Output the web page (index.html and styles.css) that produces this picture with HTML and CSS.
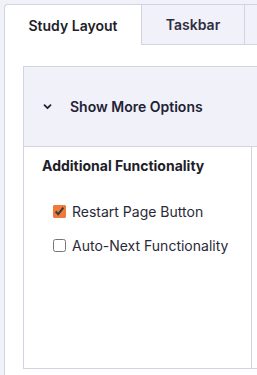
FILE: index.html
```html
<!DOCTYPE html>
<html>
<head>
<meta charset="utf-8">
<link rel="stylesheet" href="styles.css">
</head>
<body>
<div class="wrap">
  <div class="tabs">
    <div class="tab active">Study Layout</div>
    <div class="tab">Taskbar</div>
    <div class="tab tab-rest"></div>
  </div>
  <div class="panel">
    <div class="box">
      <div class="box-head">
        <svg class="chev" width="9" height="6" viewBox="0 0 9 6"><path d="M1.5 1.2 L4.5 4.2 L7.5 1.2" fill="none" stroke="#222233" stroke-width="1.8" stroke-linecap="round" stroke-linejoin="round"/></svg>
        <span class="head-text">Show More Options</span>
      </div>
      <div class="box-body">
        <div class="col">
          <div class="col-title">Additional Functionality</div>
          <label class="opt"><input type="checkbox" checked> Restart Page Button</label>
          <label class="opt"><input type="checkbox"> Auto-Next Functionality</label>
        </div>
        <div class="col2"></div>
      </div>
    </div>
  </div>
</div>
</body>
</html>
```
FILE: styles.css
```css
html, body {
  margin: 0;
  padding: 0;
  background: #f1f1fa;
  height: 100%;
  overflow: hidden;
}
.wrap {
  padding: 4px 0 0 4px;
  display: flex;
  flex-direction: column;
  height: 371px;
  font-family: Inter, "Liberation Sans", sans-serif;
  color: #222233;
}
.tabs {
  display: flex;
  height: 41px;
}
.tab {
  flex: none;
  box-sizing: border-box;
  width: 103px;
  height: 41px;
  border: 1px solid #d3d3e2;
  border-left: none;
  background: #f1f1fa;
  font-size: 14px;
  font-weight: 600;
  display: flex;
  align-items: center;
  justify-content: center;
  color: #2e2e40;
}
.tab.active {
  width: 138px;
  border-left: 1px solid #d3d3e2;
  border-bottom: none;
  background: #fff;
  border-top-left-radius: 4px;
  color: #1e1e2a;
}
.tab.tab-rest {
  width: 20px;
  border-right: none;
}
.panel {
  flex: 1;
  background: #fff;
  border-left: 1px solid #d3d3e2;
  padding: 21px 0 0 18px;
  display: flex;
  flex-direction: column;
}
.box {
  height: 301px;
  border: 1px solid #d3d3e2;
  border-right: none;
  display: flex;
  flex-direction: column;
}
.box-head {
  flex: none;
  height: 79px;
  background: #f1f1fa;
  border-bottom: 1px solid #d3d3e2;
  display: flex;
  align-items: center;
  padding-left: 19px;
}
.chev {
  margin-right: 18px;
  margin-top: 1px;
}
.head-text {
  font-size: 14px;
  font-weight: 600;
  color: #222233;
}
.box-body {
  flex: 1;
  display: flex;
}
.col {
  width: 209px;
  border-right: 1px solid #d3d3e2;
  padding: 10px 0 0 18px;
}
.col-title {
  font-size: 14px;
  font-weight: 700;
  color: #1e1e2a;
  margin-bottom: 27px;
}
.opt {
  display: flex;
  align-items: center;
  font-family: Inter, "Liberation Sans", sans-serif;
  font-size: 14px;
  color: #2a2a36;
  height: 20px;
  margin-bottom: 14px;
  margin-left: 10px;
}
.opt input {
  margin: 0 6px 0 1px;
  width: 13px;
  height: 13px;
  accent-color: #f07a3a;
}
.col2 {
  flex: 1;
}
```
